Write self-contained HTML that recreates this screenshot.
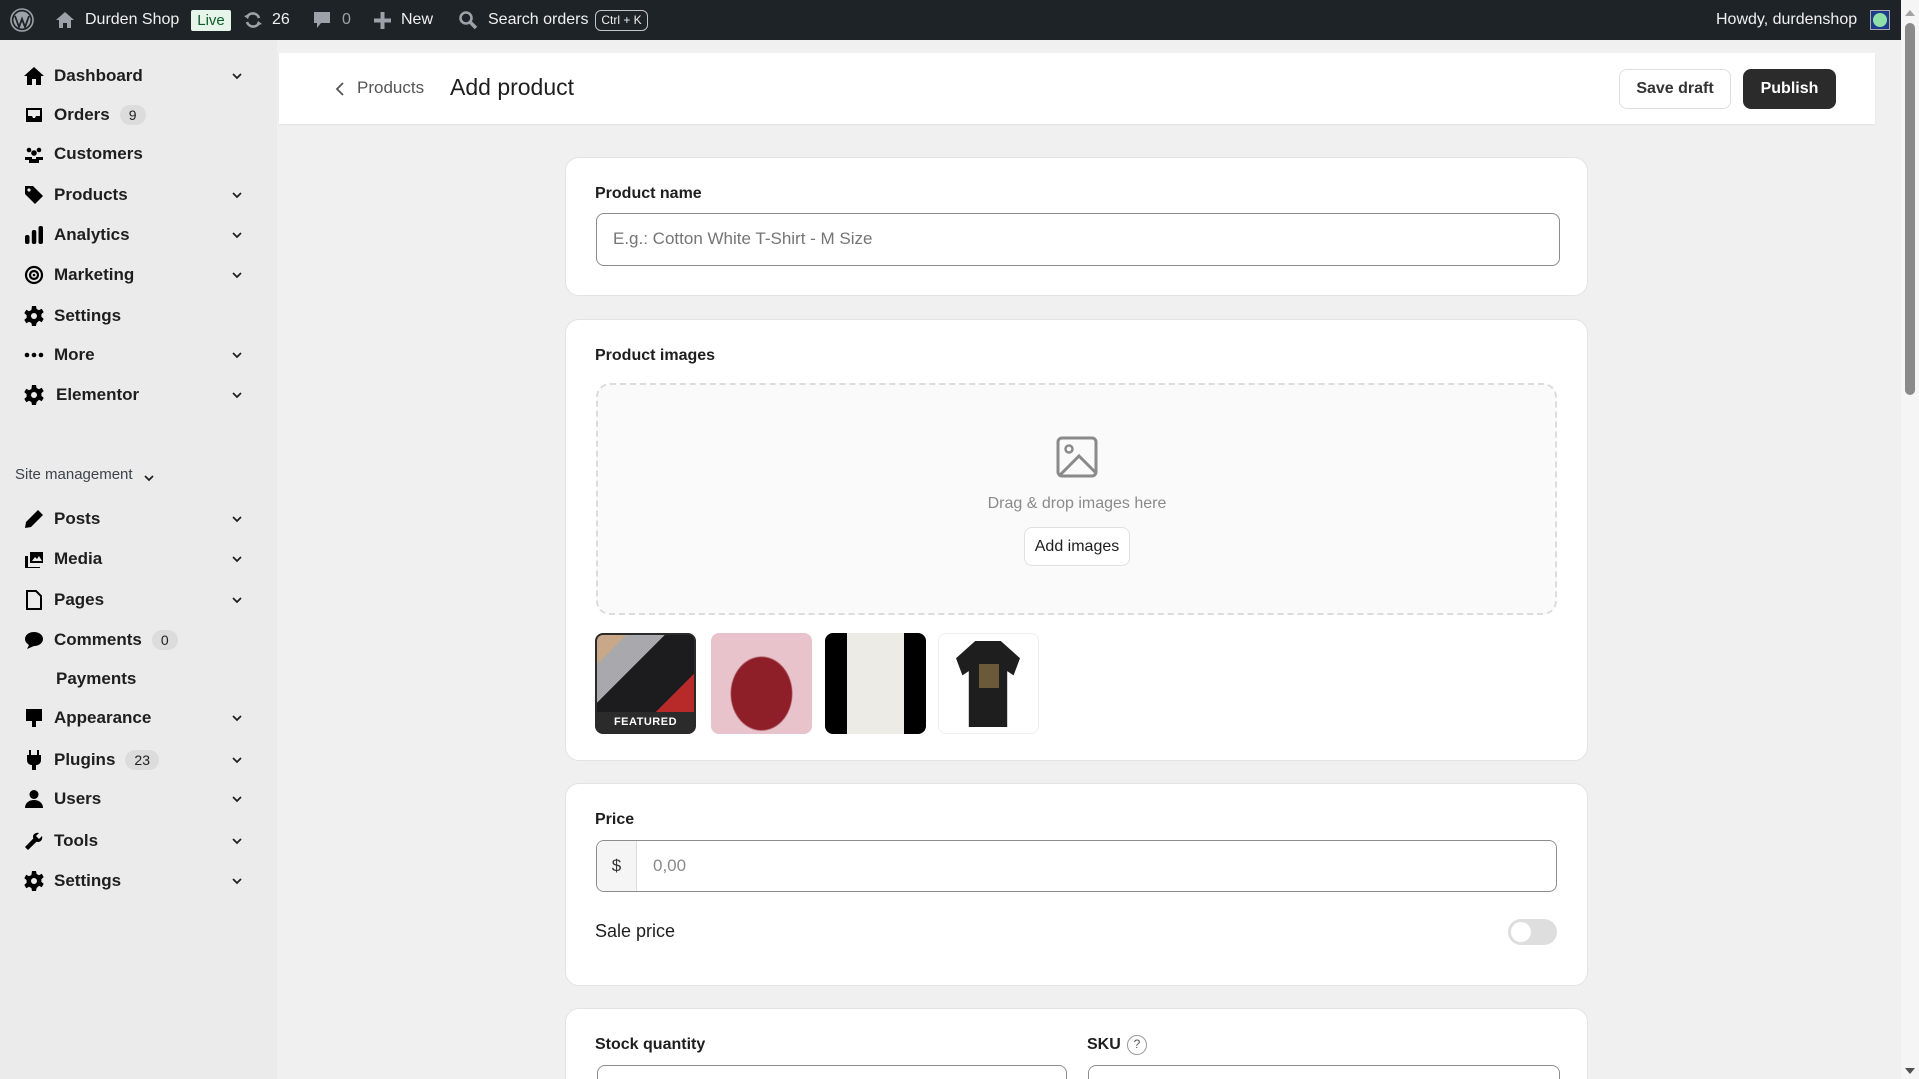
<!DOCTYPE html>
<html style="background:#f0f0f0"><head><meta charset="utf-8">
<style>
*{box-sizing:border-box;margin:0;padding:0}
html,body{overflow:hidden}
body{width:1919px;height:1079px;background:#f0f0f0;font-family:"Liberation Sans",sans-serif;color:#1e1e1e;position:relative}
.a{position:absolute}
#top{left:0;top:0;width:1901px;height:40px;background:#1d2327;color:#f0f0f1;font-size:16px}
#top .a{top:0;line-height:40px;white-space:nowrap}
#side{left:0;top:40px;width:277px;height:1039px;background:#ebebeb}
.it{position:absolute;left:24px;height:30px;font-size:17px;font-weight:600;color:#1e1e1e;display:flex;align-items:center}
.it svg{width:20px;height:20px;margin-right:10px;flex:none}
.chev{position:absolute;left:231px;width:12px;height:12px}
.badge{display:inline-block;background:#dcdcdc;border-radius:12px;font-size:14px;padding:2px 9px;margin-left:10px;font-weight:500}
.card{position:absolute;left:565px;width:1023px;background:#fff;border:1px solid #e3e3e3;border-radius:14px}
.lbl{position:absolute;font-size:16px;font-weight:600}
.inp{position:absolute;border:1px solid #8c8c8c;border-radius:8px;background:#fff;font-size:17px;color:#757575}
.btn{position:absolute;border-radius:8px;font-size:16px;font-weight:600;display:flex;align-items:center;justify-content:center}
.th{position:absolute;top:633px;width:101px;height:101px;border-radius:8px;overflow:hidden}
</style></head><body>
<div id="top" class="a">
 <svg class="a" style="left:10px;top:8px" width="24" height="24" viewBox="0 0 24 24"><circle cx="12" cy="12" r="11" fill="none" stroke="#9ca2a7" stroke-width="1.6"/><circle cx="12" cy="12" r="8.5" fill="#9ca2a7"/><path d="M5 8l4 11 3-8 3 8 4-11" stroke="#1d2327" stroke-width="1.8" fill="none"/></svg>
 <svg class="a" style="left:55px;top:11px" width="20" height="18" viewBox="0 0 20 18"><path d="M10 1L1 9h3v8h4v-5h4v5h4V9h3z" fill="#9ca2a7"/></svg>
 <span class="a" style="left:85px">Durden Shop</span>
 <span class="a" style="left:191px;top:10px!important;height:21px;line-height:21px!important;width:40px;background:#e6f4ea;color:#0a5c27;text-align:center;border-radius:2px;font-size:15px">Live</span>
 <svg class="a" style="left:243px;top:10px" width="20" height="20" viewBox="0 0 20 20"><path d="M16 8a6.5 6.5 0 0 0-12 -1M4 12a6.5 6.5 0 0 0 12 1" stroke="#9ca2a7" stroke-width="2.6" fill="none"/><path d="M1 6l4 3 2-5zM19 14l-4-3-2 5z" fill="#9ca2a7"/></svg>
 <span class="a" style="left:272px">26</span>
 <svg class="a" style="left:313px;top:11px" width="18" height="20" viewBox="0 0 18 20"><path d="M1 1h16v11H8l-4 5v-5H1z" fill="#9ca2a7"/></svg>
 <span class="a" style="left:342px;color:#9ca2a7">0</span>
 <svg class="a" style="left:374px;top:12px" width="17" height="17" viewBox="0 0 17 17"><path d="M6.5 0h4v6.5H17v4h-6.5V17h-4v-6.5H0v-4h6.5z" fill="#9ca2a7"/></svg>
 <span class="a" style="left:401px">New</span>
 <svg class="a" style="left:458px;top:10px" width="20" height="20" viewBox="0 0 20 20"><circle cx="8" cy="8" r="5.5" stroke="#9ca2a7" stroke-width="2.6" fill="none"/><path d="M12 12l6 6" stroke="#9ca2a7" stroke-width="3.5"/></svg>
 <span class="a" style="left:488px">Search orders</span>
 <span class="a" style="left:595px;top:10px!important;height:21px;line-height:19px!important;width:53px;border:1px solid #c3c4c7;border-radius:6px;font-size:12px;text-align:center">Ctrl + K</span>
 <span class="a" style="left:1716px">Howdy, durdenshop</span>
 <div class="a" style="left:1870px;top:10px;width:20px;height:20px;background:#1e3a8a;border:1px solid #aaa"><div style="margin:2px;width:14px;height:14px;border-radius:50%;background:#8fe0a8"></div></div>
</div>
<div class="a" style="left:1901px;top:0;width:18px;height:1079px;background:#f5f5f5"></div>
<div class="a" style="left:1905px;top:10px;width:0;height:0;border-left:5px solid transparent;border-right:5px solid transparent;border-bottom:6px solid #a3a3a3"></div>
<div class="a" style="left:1905px;top:23px;width:10px;height:372px;background:#8a8a8a;border-radius:5px"></div>
<div class="a" style="left:1905px;top:1068px;width:0;height:0;border-left:5px solid transparent;border-right:5px solid transparent;border-top:6px solid #505050"></div>

<div id="side" class="a"></div>
<div id="nav">
<div class="it" style="top:61px"><svg viewBox="0 0 20 20"><path d="M10 1L0 10h3v9h5v-6h4v6h5v-9h3z"/></svg>Dashboard</div>
<div class="it" style="top:100px"><svg viewBox="0 0 20 20"><path d="M2 3h16v14H2zM4 5v6h4l1 2h2l1-2h4V5z"/></svg>Orders<span class="badge">9</span></div>
<div class="it" style="top:139px"><svg viewBox="0 0 20 20"><circle cx="5" cy="6" r="2.3"/><circle cx="15" cy="6" r="2.3"/><circle cx="10" cy="9" r="2.8"/><path d="M1 13h7v3H1zM12 13h7v3h-7zM5 15h10v4H5z"/></svg>Customers</div>
<div class="it" style="top:180px"><svg viewBox="0 0 20 20"><path d="M1 1h8l10 10-8 8L1 9z"/><circle cx="5" cy="5" r="1.6" fill="#ebebeb"/></svg>Products</div>
<div class="it" style="top:220px"><svg viewBox="0 0 20 20"><rect x="1" y="10" width="4.5" height="9" rx="2"/><rect x="7.8" y="5" width="4.5" height="14" rx="2"/><rect x="14.5" y="1" width="4.5" height="18" rx="2"/></svg>Analytics</div>
<div class="it" style="top:260px"><svg viewBox="0 0 20 20"><circle cx="10" cy="10" r="8" fill="none" stroke="#000" stroke-width="2.2"/><circle cx="10" cy="10" r="4" fill="none" stroke="#000" stroke-width="2.2"/><circle cx="10" cy="10" r="1.3"/></svg>Marketing</div>
<div class="it" style="top:301px"><svg viewBox="0 0 20 20"><path d="M8 0h4l.6 3 2.4 1.3 2.7-1.6 2 3.4-2.3 2v2.8l2.3 2-2 3.4-2.7-1.6L12.6 17 12 20H8l-.6-3L5 15.7l-2.7 1.6-2-3.4 2.3-2V9.1L.3 7.1l2-3.4L5 5.3 7.4 4z"/><circle cx="10" cy="10" r="3" fill="#ebebeb"/></svg>Settings</div>
<div class="it" style="top:340px"><svg viewBox="0 0 20 20"><circle cx="3" cy="10" r="2.3"/><circle cx="10" cy="10" r="2.3"/><circle cx="17" cy="10" r="2.3"/></svg>More</div>
<div class="it" style="top:380px"><svg viewBox="0 0 20 20" style="margin-right:12px"><path d="M8 0h4l.6 3 2.4 1.3 2.7-1.6 2 3.4-2.3 2v2.8l2.3 2-2 3.4-2.7-1.6L12.6 17 12 20H8l-.6-3L5 15.7l-2.7 1.6-2-3.4 2.3-2V9.1L.3 7.1l2-3.4L5 5.3 7.4 4z"/><circle cx="10" cy="10" r="3" fill="#ebebeb"/></svg>Elementor</div>
<div class="a" style="left:15px;top:466px;font-size:15px;color:#3c434a">Site management</div>
<svg class="chev" style="left:143px;top:472px" viewBox="0 0 12 12"><path d="M2 4l4 4 4-4" stroke="#1e1e1e" stroke-width="1.7" fill="none"/></svg>
<div class="it" style="top:504px"><svg viewBox="0 0 20 20"><path d="M14 1l5 5L7 18l-6 1 1-6z"/></svg>Posts</div>
<div class="it" style="top:544px"><svg viewBox="0 0 20 20"><path d="M6 3h13v11H6z"/><path d="M1 7h3v11h12v1H1z"/><path d="M8 12l3-4 2 2 2-3 3 5z" fill="#ebebeb"/></svg>Media</div>
<div class="it" style="top:585px"><svg viewBox="0 0 20 20"><path d="M3 1h9l5 5v13H3z" fill="none" stroke="#000" stroke-width="2"/></svg>Pages</div>
<div class="it" style="top:625px"><svg viewBox="0 0 20 20"><path d="M10 2c5 0 9 3 9 7s-4 7-9 7l-7 3 2-4C2 13 1 11 1 9c0-4 4-7 9-7z"/></svg>Comments<span class="badge">0</span></div>
<div class="it" style="top:664px;left:56px">Payments</div>
<div class="it" style="top:703px"><svg viewBox="0 0 20 20"><path d="M2 1h16v10H2zM2 11h16v2h-6v6H8v-6H2z"/></svg>Appearance</div>
<div class="it" style="top:745px"><svg viewBox="0 0 20 20"><path d="M5 0h2v5h6V0h2v5h2v5c0 3-2 5-5 5v5H8v-5c-3 0-5-2-5-5V5h2z"/></svg>Plugins<span class="badge">23</span></div>
<div class="it" style="top:784px"><svg viewBox="0 0 20 20"><circle cx="10" cy="5.5" r="4.5"/><path d="M1 19c0-5 4-8 9-8s9 3 9 8z"/></svg>Users</div>
<div class="it" style="top:826px"><svg viewBox="0 0 20 20"><path d="M18 5l-3 3-3-3 3-3c-3-1-6 1-6 4l.3 1.5L1 16l3 3 8.5-8.3L14 11c3 0 5-3 4-6z"/></svg>Tools</div>
<div class="it" style="top:866px"><svg viewBox="0 0 20 20"><path d="M8 0h4l.6 3 2.4 1.3 2.7-1.6 2 3.4-2.3 2v2.8l2.3 2-2 3.4-2.7-1.6L12.6 17 12 20H8l-.6-3L5 15.7l-2.7 1.6-2-3.4 2.3-2V9.1L.3 7.1l2-3.4L5 5.3 7.4 4z"/><circle cx="10" cy="10" r="3" fill="#ebebeb"/></svg>Settings</div>
</div>
<svg class="chev" style="top:70px" viewBox="0 0 12 12"><path d="M2 4l4 4 4-4" stroke="#1e1e1e" stroke-width="1.7" fill="none"/></svg>
<svg class="chev" style="top:189px" viewBox="0 0 12 12"><path d="M2 4l4 4 4-4" stroke="#1e1e1e" stroke-width="1.7" fill="none"/></svg>
<svg class="chev" style="top:229px" viewBox="0 0 12 12"><path d="M2 4l4 4 4-4" stroke="#1e1e1e" stroke-width="1.7" fill="none"/></svg>
<svg class="chev" style="top:269px" viewBox="0 0 12 12"><path d="M2 4l4 4 4-4" stroke="#1e1e1e" stroke-width="1.7" fill="none"/></svg>
<svg class="chev" style="top:349px" viewBox="0 0 12 12"><path d="M2 4l4 4 4-4" stroke="#1e1e1e" stroke-width="1.7" fill="none"/></svg>
<svg class="chev" style="top:389px" viewBox="0 0 12 12"><path d="M2 4l4 4 4-4" stroke="#1e1e1e" stroke-width="1.7" fill="none"/></svg>
<svg class="chev" style="top:513px" viewBox="0 0 12 12"><path d="M2 4l4 4 4-4" stroke="#1e1e1e" stroke-width="1.7" fill="none"/></svg>
<svg class="chev" style="top:553px" viewBox="0 0 12 12"><path d="M2 4l4 4 4-4" stroke="#1e1e1e" stroke-width="1.7" fill="none"/></svg>
<svg class="chev" style="top:594px" viewBox="0 0 12 12"><path d="M2 4l4 4 4-4" stroke="#1e1e1e" stroke-width="1.7" fill="none"/></svg>
<svg class="chev" style="top:712px" viewBox="0 0 12 12"><path d="M2 4l4 4 4-4" stroke="#1e1e1e" stroke-width="1.7" fill="none"/></svg>
<svg class="chev" style="top:754px" viewBox="0 0 12 12"><path d="M2 4l4 4 4-4" stroke="#1e1e1e" stroke-width="1.7" fill="none"/></svg>
<svg class="chev" style="top:793px" viewBox="0 0 12 12"><path d="M2 4l4 4 4-4" stroke="#1e1e1e" stroke-width="1.7" fill="none"/></svg>
<svg class="chev" style="top:835px" viewBox="0 0 12 12"><path d="M2 4l4 4 4-4" stroke="#1e1e1e" stroke-width="1.7" fill="none"/></svg>
<svg class="chev" style="top:875px" viewBox="0 0 12 12"><path d="M2 4l4 4 4-4" stroke="#1e1e1e" stroke-width="1.7" fill="none"/></svg>

<div class="a" style="left:279px;top:53px;width:1596px;height:71px;background:#fff;box-shadow:0 1px 2px rgba(0,0,0,.06)"></div>
<svg class="a" style="left:334px;top:81px" width="12" height="16" viewBox="0 0 12 16"><path d="M9 2L3 8l6 6" stroke="#555" stroke-width="1.8" fill="none"/></svg>
<div class="a" style="left:357px;top:78px;font-size:17px;color:#555">Products</div>
<div class="a" style="left:450px;top:74px;font-size:23px;font-weight:500;color:#1e1e1e">Add product</div>
<div class="btn" style="left:1619px;top:69px;width:112px;height:40px;border:1px solid #ddd;background:#fff;color:#333">Save draft</div>
<div class="btn" style="left:1743px;top:69px;width:93px;height:40px;background:#2b2b2b;color:#fff">Publish</div>

<div class="card" style="top:157px;height:139px"></div>
<div class="lbl" style="left:595px;top:185px">Product name</div>
<div class="inp" style="left:596px;top:213px;width:964px;height:53px;padding:15px 16px">E.g.: Cotton White T-Shirt - M Size</div>

<div class="card" style="top:319px;height:442px"></div>
<div class="lbl" style="left:595px;top:347px">Product images</div>
<div class="a" style="left:596px;top:383px;width:961px;height:232px;border:2px dashed #dcdcdc;border-radius:14px;background:#fafafa"></div>
<svg class="a" style="left:1056px;top:436px" width="42" height="42" viewBox="0 0 42 42"><rect x="2" y="2" width="38" height="38" rx="4" fill="none" stroke="#8a8a8a" stroke-width="3"/><circle cx="13" cy="13" r="3.5" fill="none" stroke="#8a8a8a" stroke-width="2.5"/><path d="M4 39l19-19 17 17" fill="none" stroke="#8a8a8a" stroke-width="3"/></svg>
<div class="a" style="left:960px;width:234px;top:495px;text-align:center;font-size:16px;color:#8a8a8a">Drag &amp; drop images here</div>
<div class="btn" style="left:1024px;top:527px;width:106px;height:39px;border:1px solid #e0e0e0;background:#fff;font-weight:500;font-size:16px">Add images</div>
<div class="th" style="left:595px;background:linear-gradient(135deg,#c9a88a 0 15%,#a8a8ad 15% 35%,#1c1c1f 35% 70%,#b82a2a 70%);border:2px solid #2a2a2a">
 <div style="position:absolute;left:0;right:0;bottom:0;height:20px;background:#2b2b2b;color:#fff;font-size:11px;font-weight:700;text-align:center;line-height:20px;letter-spacing:.5px">FEATURED</div></div>
<div class="th" style="left:711px;background:radial-gradient(ellipse at 50% 60%,#8e1f28 0 42%,#e8c3cc 44%)"></div>
<div class="th" style="left:825px;background:linear-gradient(90deg,#000 0 22%,#ecebe6 22% 78%,#000 78%)"></div>
<div class="th" style="left:938px;background:#fff;border:1px solid #eee"><div style="position:absolute;left:17px;top:7px;width:64px;height:86px;background:#1e1e1e;clip-path:polygon(30% 0,70% 0,100% 20%,90% 40%,80% 35%,80% 100%,20% 100%,20% 35%,10% 40%,0 20%)"></div><div style="position:absolute;left:40px;top:30px;width:20px;height:24px;background:#6b5a3a"></div></div>

<div class="card" style="top:783px;height:203px"></div>
<div class="lbl" style="left:595px;top:811px">Price</div>
<div class="inp" style="left:596px;top:840px;width:961px;height:52px;overflow:hidden"><div style="position:absolute;left:0;top:0;width:40px;height:50px;background:#f5f5f5;border-right:1px solid #ddd;color:#333;text-align:center;line-height:50px">$</div><div style="position:absolute;left:56px;top:0;line-height:50px;color:#8a8a8a">0,00</div></div>
<div class="a" style="left:595px;top:921px;font-size:18px;font-weight:500">Sale price</div>
<div class="a" style="left:1508px;top:919px;width:49px;height:26px;border-radius:13px;background:#dedede"><div style="position:absolute;left:3px;top:3px;width:20px;height:20px;border-radius:50%;background:#fff"></div></div>

<div class="card" style="top:1008px;height:120px"></div>
<div class="lbl" style="left:595px;top:1036px">Stock quantity</div>
<div class="lbl" style="left:1087px;top:1036px">SKU</div>
<div class="a" style="left:1127px;top:1035px;width:20px;height:20px;border:1.5px solid #999;border-radius:50%;font-size:12px;text-align:center;line-height:17px;color:#555">?</div>
<div class="inp" style="left:597px;top:1065px;width:470px;height:60px"></div>
<div class="inp" style="left:1088px;top:1065px;width:472px;height:60px"></div>
</body></html>
